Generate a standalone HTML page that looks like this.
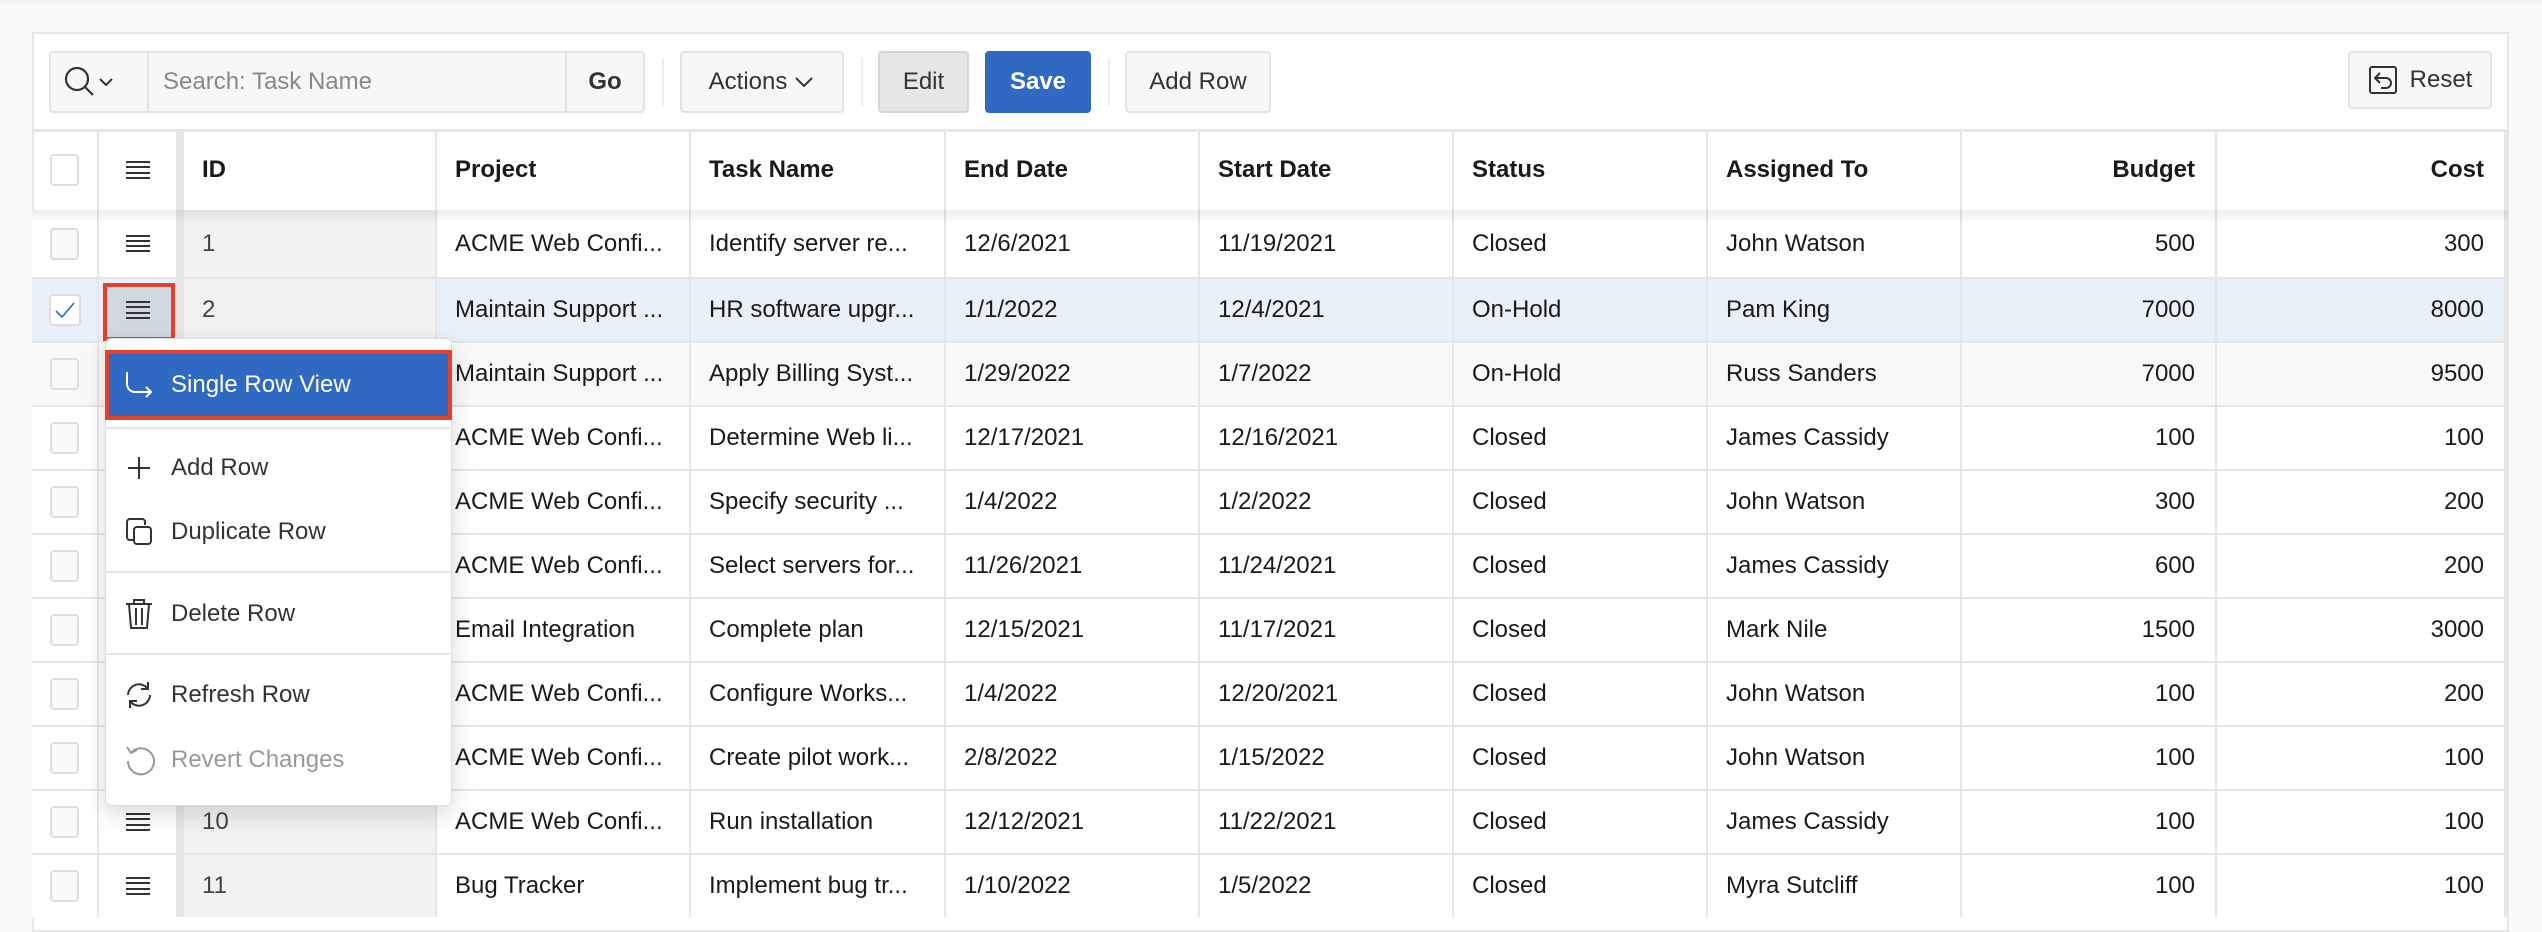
<!DOCTYPE html>
<html><head><meta charset="utf-8"><style>
*{box-sizing:border-box;margin:0;padding:0}
body{width:2542px;height:916px;overflow:hidden;background:#fafafa;font-family:"Liberation Sans",sans-serif;color:#1a1a1a;position:relative}
.abs{position:absolute}
.panel{left:32px;top:32px;width:2477px;height:900px;background:#fff;border:2px solid #e6e6e6}
.btn{position:absolute;top:51px;height:62px;background:#f7f7f7;border:2px solid #e3e3e3;border-radius:4px;font-size:24px;display:flex;align-items:center;justify-content:center;color:#333}
.sep{position:absolute;top:58px;width:2px;height:48px;background:#eee}
.row{position:absolute;left:32px;width:2476px;border-top:2px solid #e6e6e6}
.c{position:absolute;top:0;height:100%;display:flex;align-items:center;padding:0 18px;font-size:24px;white-space:nowrap;border-right:2px solid #e6e6e6}
.r{justify-content:flex-end;padding-right:20px}
.cb{width:32px;height:32px;border:2px solid #ddd;border-radius:4px;background:#f9f9f9}
.ham{width:24px;height:18px;display:flex;flex-direction:column;justify-content:space-between}
.ham i{display:block;height:2px;background:#333}
.mi{position:absolute;left:105px;width:347px;height:60px;display:flex;align-items:center;font-size:24px;color:#333}
.mi svg{position:absolute;left:19px}
.mi span{position:absolute;left:66px}
.msep{position:absolute;left:105px;width:347px;height:2px;background:#e6e6e6}
</style></head><body>
<div class="abs" style="left:0;top:0;width:2542px;height:6px;background:linear-gradient(#eee,#fafafa)"></div>
<div class="abs panel"></div>
<!-- toolbar -->
<div class="btn" style="left:49px;width:596px;justify-content:flex-start"></div>
<div class="abs" style="left:147px;top:53px;width:2px;height:58px;background:#e3e3e3"></div>
<div class="abs" style="left:149px;top:53px;width:416px;height:58px;background:#f7f7f7;font-size:24px;color:#888;display:flex;align-items:center;padding-left:14px">Search: Task Name</div>
<div class="abs" style="left:565px;top:53px;width:2px;height:58px;background:#e3e3e3"></div>
<div class="abs" style="left:567px;top:53px;width:76px;height:58px;font-size:24px;font-weight:bold;color:#333;display:flex;align-items:center;justify-content:center">Go</div>
<svg class="abs" style="left:64px;top:66px" width="64" height="34" viewBox="0 0 64 34"><circle cx="13" cy="13" r="11" fill="none" stroke="#333" stroke-width="2.2"/><path d="M21 21l8 8" stroke="#333" stroke-width="2.2"/><path d="M36 13l6 6 6-6" fill="none" stroke="#333" stroke-width="2"/></svg>
<div class="sep" style="left:662px"></div>
<div class="btn" style="left:680px;width:164px">Actions<svg width="22" height="14" style="margin-left:6px" viewBox="0 0 22 14"><path d="M3 3l8 8 8-8" fill="none" stroke="#333" stroke-width="2"/></svg></div>
<div class="sep" style="left:861px"></div>
<div class="btn" style="left:878px;width:91px;background:#e6e6e6;border-color:#d6d6d6">Edit</div>
<div class="btn" style="left:985px;width:106px;background:#2f69c2;border-color:#2f69c2;color:#fff;font-weight:bold">Save</div>
<div class="sep" style="left:1108px"></div>
<div class="btn" style="left:1125px;width:146px">Add Row</div>
<div class="btn" style="left:2348px;width:144px;top:51px;height:58px"><svg width="30" height="30" viewBox="0 0 30 30" style="margin-right:12px"><rect x="2" y="2" width="26" height="26" rx="2" fill="none" stroke="#333" stroke-width="2"/><path d="M12 8l-5 5 5 5M7 13h11a5 5 0 0 1 0 10h-5" fill="none" stroke="#333" stroke-width="2"/></svg>Reset</div>
<div class="abs" style="left:32px;top:129px;width:2476px;height:3px;background:#e6e6e6"></div>
<!-- header -->
<div class="row" style="top:130px;height:80px;border-top:none;font-weight:bold">
<div class="c" style="left:0;width:67px;justify-content:center"><div class="cb" style="background:#fff"></div></div>
<div class="c" style="left:67px;width:77px;justify-content:center;border-right:8px solid #e6e6e6;width:85px"><div class="ham"><i></i><i></i><i></i><i></i></div></div>
<div class="c" style="left:152px;width:253px;font-weight:bold">ID</div>
<div class="c" style="left:405px;width:254px;font-weight:bold">Project</div>
<div class="c" style="left:659px;width:255px;font-weight:bold">Task Name</div>
<div class="c" style="left:914px;width:254px;font-weight:bold">End Date</div>
<div class="c" style="left:1168px;width:254px;font-weight:bold">Start Date</div>
<div class="c" style="left:1422px;width:254px;font-weight:bold">Status</div>
<div class="c" style="left:1676px;width:254px;font-weight:bold">Assigned To</div>
<div class="c r" style="left:1930px;width:255px;font-weight:bold">Budget</div>
<div class="c r" style="left:2185px;width:291px;font-weight:bold;border-right:4px solid #e6e6e6">Cost</div>
</div>
<div id="rows"></div>
<div class="abs" style="left:32px;top:210px;width:2476px;height:14px;background:linear-gradient(rgba(0,0,0,0.07),rgba(0,0,0,0));z-index:5"></div>
<script>
var d=[["1","ACME Web Confi...","Identify server re...","12/6/2021","11/19/2021","Closed","John Watson","500","300"],
["2","Maintain Support ...","HR software upgr...","1/1/2022","12/4/2021","On-Hold","Pam King","7000","8000"],
["3","Maintain Support ...","Apply Billing Syst...","1/29/2022","1/7/2022","On-Hold","Russ Sanders","7000","9500"],
["4","ACME Web Confi...","Determine Web li...","12/17/2021","12/16/2021","Closed","James Cassidy","100","100"],
["5","ACME Web Confi...","Specify security ...","1/4/2022","1/2/2022","Closed","John Watson","300","200"],
["6","ACME Web Confi...","Select servers for...","11/26/2021","11/24/2021","Closed","James Cassidy","600","200"],
["7","Email Integration","Complete plan","12/15/2021","11/17/2021","Closed","Mark Nile","1500","3000"],
["8","ACME Web Confi...","Configure Works...","1/4/2022","12/20/2021","Closed","John Watson","100","200"],
["9","ACME Web Confi...","Create pilot work...","2/8/2022","1/15/2022","Closed","John Watson","100","100"],
["10","ACME Web Confi...","Run installation","12/12/2021","11/22/2021","Closed","James Cassidy","100","100"],
["11","Bug Tracker","Implement bug tr...","1/10/2022","1/5/2022","Closed","Myra Sutcliff","100","100"]];
var L=[152,405,659,914,1168,1422,1676,1930,2185],W=[253,254,255,254,254,254,254,255,291];
var h="";
d.forEach(function(r,i){
 var top=i==0?210:277+64*(i-1),ht=i==0?67:64;
 var bg=i==1?"#e8f0f9":(i==2?"#f8f8f8":"#fff");
 h+='<div class="row" style="top:'+top+'px;height:'+ht+'px;background:'+bg+(i==0?';border-top:none':'')+'">';
 h+='<div class="c" style="left:0;width:67px;justify-content:center"><div class="cb" style="'+(i==1?'background:#fff':'')+'">'+(i==1?'<svg width="28" height="28" viewBox="0 0 28 28"><path d="M5 15l6 6 12-14" fill="none" stroke="#2f69c2" stroke-width="1.6"/></svg>':'')+'</div></div>';
 h+='<div class="c" style="left:67px;width:85px;justify-content:center;border-right:8px solid #e6e6e6">'+(i==1?'<div style="position:absolute;left:4px;top:4px;width:72px;height:58px;background:#d0d8e2;border:4px solid #e5402a"></div>':'')+'<div class="ham" style="position:relative"><i></i><i></i><i></i><i></i></div></div>';
 for(var j=0;j<9;j++){
  h+='<div class="c'+(j>=7?' r':'')+'" style="left:'+L[j]+'px;width:'+W[j]+'px;'+(j==0?'background:#f2f2f2;color:#444;':'')+(j==8?'border-right:4px solid #e6e6e6;':'')+'">'+r[j+1-1+ (j==0?0:0)]+'</div>';
 }
 h+='</div>';
});
document.getElementById("rows").innerHTML=h;
</script>
<!-- menu -->
<div class="abs" style="left:105px;top:338px;width:347px;height:468px;background:#fff;border:1px solid #ddd;border-radius:6px;box-shadow:0 8px 24px rgba(0,0,0,0.15);z-index:10"></div>
<div style="position:absolute;left:0;top:0;z-index:11">
<div class="abs" style="left:105px;top:350px;width:347px;height:70px;background:#2f69c2;border:4px solid #e5402a"></div>
<div class="mi" style="top:355px;color:#fff"><svg width="30" height="30" viewBox="0 0 30 30"><path d="M3 2v12a8 8 0 0 0 8 8h16M22 17l5 5-5 5" fill="none" stroke="#fff" stroke-width="2"/></svg><span>Single Row View</span></div>
<div class="msep" style="top:427px"></div>
<div class="mi" style="top:438px"><svg width="30" height="30" viewBox="0 0 30 30"><path d="M15 4v22M4 15h22" stroke="#333" stroke-width="2"/></svg><span>Add Row</span></div>
<div class="mi" style="top:502px"><svg width="30" height="32" viewBox="0 0 30 32"><path d="M9 24H6a3 3 0 0 1-3-3V6a3 3 0 0 1 3-3h12a3 3 0 0 1 3 3v3" fill="none" stroke="#333" stroke-width="2"/><rect x="10" y="11" width="17" height="17" rx="3" fill="none" stroke="#333" stroke-width="2"/></svg><span>Duplicate Row</span></div>
<div class="msep" style="top:571px"></div>
<div class="mi" style="top:584px"><svg width="30" height="34" viewBox="0 0 30 34"><path d="M2 7h26M10 7V3h10v4M5 7l2 24h16l2-24M12 11v17M18 11v17" fill="none" stroke="#333" stroke-width="2"/></svg><span>Delete Row</span></div>
<div class="msep" style="top:653px"></div>
<div class="mi" style="top:665px"><svg width="30" height="32" viewBox="0 0 30 32"><path d="M4 16a11 11 0 0 1 20-6M26 16a11 11 0 0 1-20 6M24 3v7h-7M6 29v-7h7" fill="none" stroke="#333" stroke-width="2"/></svg><span>Refresh Row</span></div>
<div class="mi" style="top:730px;color:#999"><svg width="32" height="32" viewBox="0 0 32 32"><path d="M7 9a13 13 0 1 1-3 8M3 3l4 6 6-3" fill="none" stroke="#999" stroke-width="2"/></svg><span>Revert Changes</span></div>
</div>
</body></html>
